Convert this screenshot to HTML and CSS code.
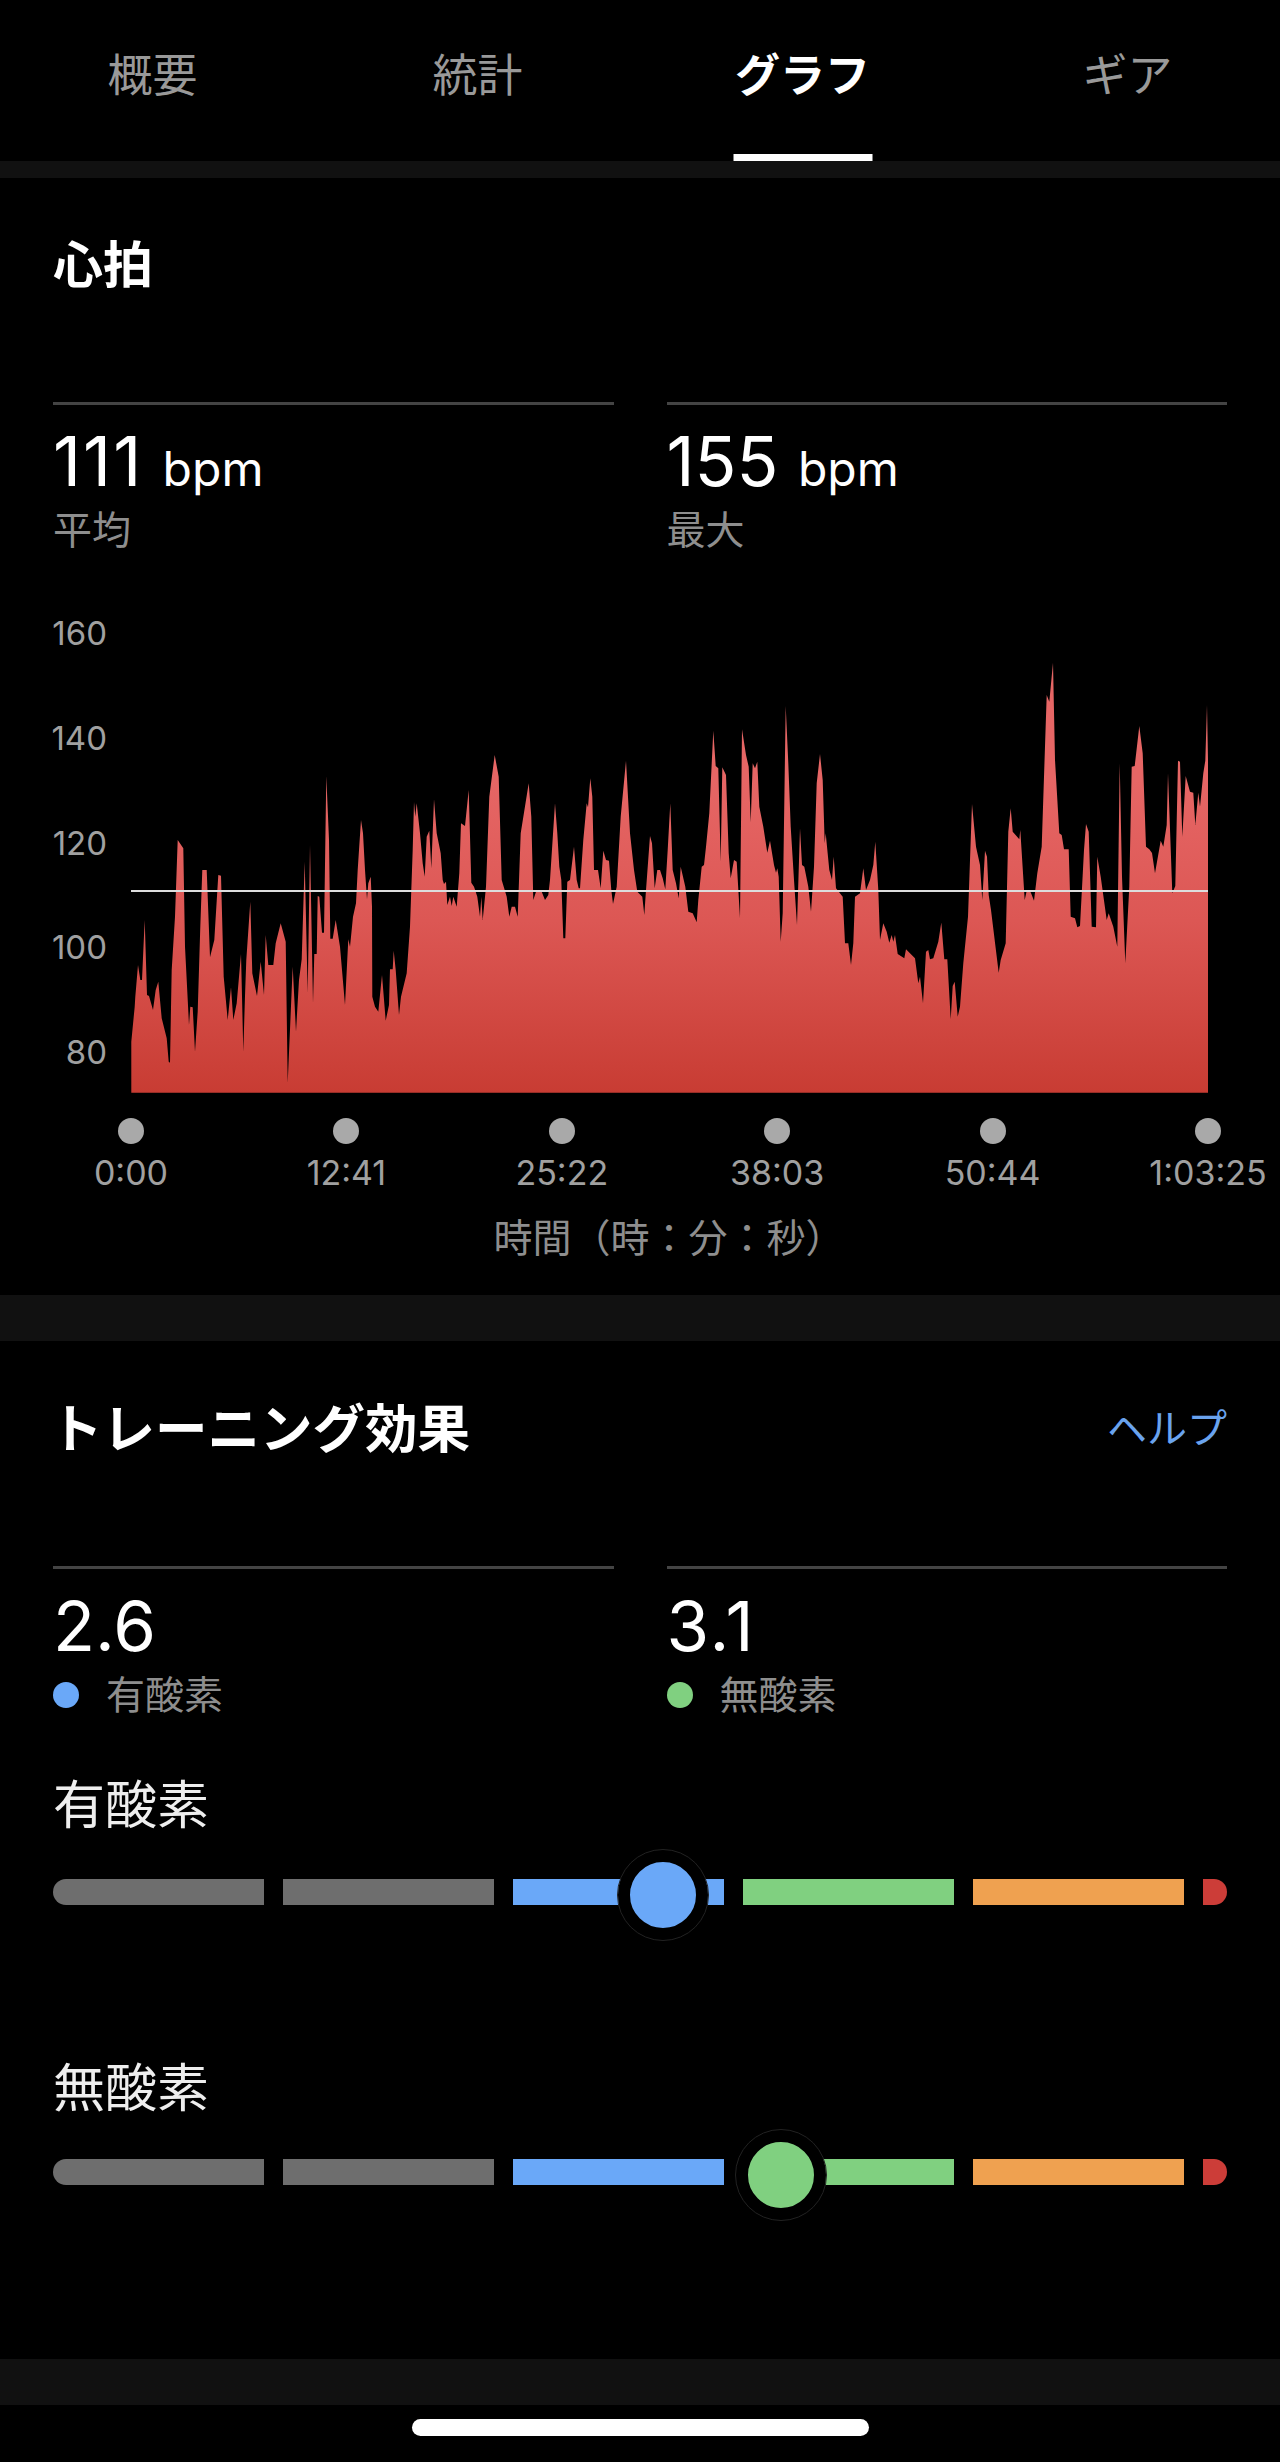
FILE: index.html
```html
<!DOCTYPE html>
<html lang="ja">
<head>
  <meta charset="utf-8">
  <title>グラフ</title>
  <link rel="stylesheet" href="styles.css">
</head>

<body>
  <nav class="tabs">
    <a class="tab">概要</a>
    <a class="tab">統計</a>
    <a class="tab active">グラフ</a>
    <a class="tab">ギア</a>
  </nav>
  <div class="band band-top"></div>

  <section class="card card-heart">
    <h2 class="card-title">心拍</h2>
    <div class="stats">
      <div class="stat">
        <div class="stat-value"><span class="num-wide">111</span> <span class="unit">bpm</span></div>
        <div class="stat-label">平均</div>
      </div>
      <div class="stat">
        <div class="stat-value">155 <span class="unit">bpm</span></div>
        <div class="stat-label">最大</div>
      </div>
    </div>

    <div class="chart">
      <div class="y-axis">
        <span>160</span>
        <span>140</span>
        <span>120</span>
        <span>100</span>
        <span>80</span>
      </div>
      <svg class="plot" width="1077" height="453" viewBox="131 640 1077 453">
        <defs>
          <linearGradient id="hrFill" gradientUnits="userSpaceOnUse" x1="0" y1="780" x2="0" y2="1093">
            <stop offset="0" stop-color="#e66665" />
            <stop offset="0.45" stop-color="#dc5754" />
            <stop offset="1" stop-color="#c83c33" />
          </linearGradient>
        </defs>
        <polygon fill="url(#hrFill)" points="131.3,1092.7 131.3,1041.7 134.7,1006.7 135.3,996.7 138,965 140.3,980 142,980 144.7,920 147,995 149,996 153,1010 155.7,990 158.3,981.7 161.7,1018.3 166.7,1038.3 168.7,1061.7 170,1062.7 171.7,970 175,916.7 177.7,840 183.3,848.3 185,946.7 189,1025 190.3,1006.7 192.7,1007.3 195,1051.7 197.7,1011.7 200.3,926.7 202.3,870 206.7,870 210,957.3 214.3,940 218.3,875 221,875.7 223.7,976.7 227.7,1020 231,987.3 233.3,1020 236.7,1003.3 241,954 243.3,1051.7 245,996 246.3,960 250.3,901.7 252.3,973.3 257,996 260.7,961.7 264,995 265.7,935 268.3,965 273.3,965 275.7,943.3 280.7,923.3 285.7,941.7 287.7,1082.7 292.7,966.7 296,1031.7 299,980 301.7,959.3 304.7,861.7 307.7,993.3 310,845 313,1003.3 314.3,954 316.7,954 317.7,896 319.3,896.7 322,932.7 324,932.7 326.3,776 329,840 330.3,938.7 332.7,938.7 335.7,920 340,946.7 345,1005 348.3,939.3 350,946.7 353,916.7 356,903.3 357.7,870 361,820 363,833.3 365,870 367,899.3 368.3,883.3 370.7,876.7 372,906.7 372.3,996.7 375,1006.7 378.3,1011.7 382,975 385.7,1020.7 389,1005 390,969.3 392.7,969.3 393.7,950.7 395.7,970 399,1015 401,996.7 406.7,973.3 410,926.7 412.7,850 414,802 415.3,816.7 416.7,803.3 420,833.3 422.7,863.3 424.7,876.7 426.7,836.7 429.3,830.7 431.3,868.3 434,799.3 436.7,833.3 440.7,853.3 442.7,880 444,884 446,881.7 447.3,905 450,896.7 451.7,906 453.3,896.7 456.7,906.7 459.3,873.3 461,823.3 465,826 468.7,790 471.3,882.7 474,886.7 477.3,896.7 480,916.7 481.3,896.7 482.7,920 486,886.7 489.3,796.7 494.7,755 498.7,776.7 501.7,880 506.7,896.7 509.3,916.7 511.7,906.7 515,906.7 517.7,916.7 520.7,833.3 528.7,783.3 531.3,816.7 533.3,900 536,891.7 541.7,891.7 545,900 548.3,895 550,880 555,803.3 557.3,833.3 559.3,866.7 561.3,880 563.3,938.3 565.3,938.3 567.3,881.7 570,880 574,846.7 576.7,880 578.7,888.3 580,888.3 583.3,840 586.7,803.3 588,807.3 590.3,778.3 592.3,796.7 594,870 598,870 600.7,888.3 603.3,850.7 606,860 609,860.7 611.3,890 613,904 616.7,886.7 620.7,816.7 626,760.7 630,833.3 634,870 637.3,891.7 642.3,896.7 644.3,915 646,890 650,836 652,843.3 654.7,888.3 657.3,870 660,870 662.7,878.3 665.3,889.3 667.7,850 670.3,803.3 672.7,870 676,883.3 678.7,898.3 680.7,866.7 685.3,886.7 688.3,911.7 692.7,913.3 696.7,922.3 698.3,900 701.7,866.7 704,865 706,846.7 709.3,813.3 713.3,730.7 715.7,766 718.3,768.3 720.7,861.7 722.3,767.3 726,775 728.7,853.3 730.7,878.3 734,860 736.7,861.7 740,918.3 742,729.3 746,755 748.7,766.7 750.7,822.3 752.7,763.3 755,768.3 757.3,761.7 759.3,806.7 763.3,826.7 767.3,852.7 770,840.7 774,865 776,872.7 777.3,868.3 778.7,876.7 780.7,941.7 782.7,913.3 785.7,706 788.3,763.3 790.7,826.7 794,880 797,925 800,828.3 802,865 804.3,866.7 808.3,886.7 811,911.7 814,866.7 816.7,783.3 820,754 822.7,780 824.7,843.3 825.7,833.3 829.3,870 832,880 833.7,856.7 836,888.3 842.7,896.7 845,943.3 848.3,943.3 851,965 853.3,943.3 855,896.7 860,893.3 863.3,868.3 866,890 870,880 873.3,865 875.3,841.7 878.3,890 880,940 883.3,923.3 886.7,931.7 889.3,942.7 891.7,935 893.3,941.7 895,935 897.7,954 904.3,958.3 906,949.3 915,958.3 918.3,983.3 920,976.7 923,1003.3 926,951.7 928.3,950 930,959.3 933.3,958.3 938.3,941.7 941.3,922.5 944.3,959.3 947.3,959.3 950.7,1019.3 952.7,986 954.7,981.7 957.7,1016.7 960,1006.7 963.3,963.3 968,916.7 972,804 976,846.7 980,865 982.3,900 985,850.7 987,856.7 988.7,895 991,910 998.7,972.7 1000.7,960 1005.7,943.3 1008.3,831.7 1010.7,808.3 1012.7,831.7 1019.3,839.3 1020.3,830 1024.7,900 1026.7,890.7 1030.7,892.3 1034,900.7 1037.3,873.3 1041.7,846.7 1046.7,695 1049.3,701.7 1053,662.7 1055,760 1059.3,833.3 1061.7,835 1064,849.3 1068.7,849.3 1070.7,916.7 1075,918.3 1077.3,927.3 1080,926 1084,850 1086,824 1088.7,831.7 1091.7,926.7 1096,927.3 1097.3,856.7 1100.7,876.7 1106.7,920 1108.7,913.3 1113.3,926.7 1117.3,946.7 1119.7,763.3 1122,876.7 1125.3,963.3 1129.3,886.7 1131.7,766.7 1134.7,766 1139.3,726 1142.7,753.3 1146,846.7 1149.3,849.3 1152,853 1155,873.3 1160.7,840.7 1163.3,846.7 1166.7,825 1168,773.3 1172.3,893.3 1175.3,886 1178,760.7 1180,761.7 1182.3,836.7 1185.7,776 1190,791.7 1193.3,792.7 1195.3,825 1198.3,792.7 1200,806.7 1203.3,773.3 1205.3,760.7 1207,705 1208,760 1208,1092.7" />
        <line class="avg-line" x1="131" y1="891" x2="1208" y2="891" />
      </svg>
    </div>

    <div class="ticks">
      <div class="tick"><span class="tick-dot"></span><span class="tick-label">0:00</span></div>
      <div class="tick"><span class="tick-dot"></span><span class="tick-label">12:41</span></div>
      <div class="tick"><span class="tick-dot"></span><span class="tick-label">25:22</span></div>
      <div class="tick"><span class="tick-dot"></span><span class="tick-label">38:03</span></div>
      <div class="tick"><span class="tick-dot"></span><span class="tick-label">50:44</span></div>
      <div class="tick"><span class="tick-dot"></span><span class="tick-label">1:03:25</span></div>
    </div>
    <div class="axis-title">時間（時：分：秒）</div>
  </section>
  <div class="band"></div>

  <section class="card card-effect">
    <div class="card-head">
      <h2 class="card-title card-title-wide">トレーニング効果</h2>
      <a class="help">ヘルプ</a>
    </div>
    <div class="stats">
      <div class="stat">
        <div class="stat-value">2.6</div>
        <div class="stat-label"><span class="dot dot-blue"></span>有酸素</div>
      </div>
      <div class="stat">
        <div class="stat-value"><span class="num-wide">3.1</span></div>
        <div class="stat-label"><span class="dot dot-green"></span>無酸素</div>
      </div>
    </div>

    <h3 class="scale-title">有酸素</h3>
    <div class="scale">
      <span class="seg seg-gray"></span>
      <span class="seg seg-gray"></span>
      <span class="seg seg-blue"></span>
      <span class="seg seg-green"></span>
      <span class="seg seg-orange"></span>
      <span class="seg seg-red"></span>
      <span class="thumb thumb-blue" style="left: 51.96%"></span>
    </div>

    <h3 class="scale-title scale-title-second">無酸素</h3>
    <div class="scale scale-second">
      <span class="seg seg-gray"></span>
      <span class="seg seg-gray"></span>
      <span class="seg seg-blue"></span>
      <span class="seg seg-green"></span>
      <span class="seg seg-orange"></span>
      <span class="seg seg-red"></span>
      <span class="thumb thumb-green" style="left: 62%"></span>
    </div>
  </section>
  <div class="band"></div>

  <div class="home-area">
    <div class="home-bar"></div>
  </div>
</body>
</html>
```

FILE: styles.css
```css
body {
  margin: 0;
  overflow-x: hidden;
  background: #000;
  color: #fff;
  font-family: Inter, "Noto Sans CJK JP", sans-serif;
}

.tabs {
  display: grid;
  grid-template-columns: repeat(4, 1fr);
  height: 161px;
  margin: 0 -10px;
}

.tab {
  display: flex;
  justify-content: center;
  padding-top: 49px;
  box-sizing: border-box;
  line-height: 54px;
  font-size: 45px;
  color: #999;
}

.tab.active {
  position: relative;
  color: #fff;
  font-weight: 700;
}

.tab.active::after {
  content: "";
  position: absolute;
  left: 50%;
  bottom: 0;
  width: 139px;
  height: 7px;
  transform: translateX(-50%);
  background: #fff;
}

.band {
  height: 46px;
  background: #111;
}

.band-top {
  height: 17px;
}

.card {
  padding: 0 53px;
}

.card-heart {
  padding-top: 57px;
  padding-bottom: 32px;
}

.card-effect {
  padding-top: 58px;
  padding-bottom: 174px;
}

.card-head {
  display: flex;
  justify-content: space-between;
  align-items: center;
}

.card-title {
  margin: 0;
  line-height: 60px;
  font-size: 50px;
  font-weight: 700;
}

.card-title-wide {
  font-size: 52.5px;
  margin-left: -3px;
}

.help {
  line-height: 54px;
  font-size: 40px;
  color: #6aa3ee;
}

.stats {
  display: grid;
  grid-template-columns: 1fr 1fr;
  column-gap: 53px;
  margin-top: 107px;
}

.stat {
  border-top: 3px solid #444;
  padding-top: 16px;
}

.card-effect .stat {
  padding-top: 17px;
}

.stat-value {
  line-height: 80px;
  font-size: 69px;
  white-space: nowrap;
}

.num-wide {
  letter-spacing: 2px;
}

.unit {
  line-height: 0;
  font-size: 48px;
}

.stat-label {
  display: flex;
  align-items: center;
  margin-top: 4px;
  line-height: 50px;
  font-size: 39px;
  color: #8e8e8e;
}

.dot {
  width: 26px;
  height: 26px;
  margin-right: 27px;
  border-radius: 50%;
}

.dot-blue {
  background: #6aa8f8;
}

.dot-green {
  background: #80d080;
}

.chart {
  display: grid;
  grid-template-columns: 54px 1077px;
  column-gap: 24px;
  margin-top: 58px;
}

.y-axis {
  display: flex;
  flex-direction: column;
  justify-content: space-between;
  align-items: flex-end;
  height: 459px;
  line-height: 40px;
  font-size: 33px;
  color: #a0a0a0;
}

.plot {
  display: block;
  margin-top: 27px;
}

.avg-line {
  stroke: #ddd;
  stroke-width: 2;
}

.ticks {
  display: flex;
  justify-content: space-between;
  margin: 25px 6px 0 65px;
}

.tick {
  display: flex;
  flex-direction: column;
  align-items: center;
  width: 26px;
}

.tick-dot {
  width: 26px;
  height: 26px;
  border-radius: 50%;
  background: #a9a9a9;
}

.tick-label {
  margin-top: 9px;
  line-height: 40px;
  font-size: 34px;
  color: #a0a0a0;
  white-space: nowrap;
}

.axis-title {
  margin: 20px 0 0 78px;
  padding-right: 20px;
  line-height: 50px;
  font-size: 39px;
  text-align: center;
  color: #8e8e8e;
}

.scale-title {
  margin: 56px 0 0;
  line-height: 60px;
  font-size: 52px;
  font-weight: 400;
  color: #eee;
}

.scale-title-second {
  margin-top: 154px;
}

.scale {
  position: relative;
  display: flex;
  gap: 19.5px;
  height: 26px;
  margin-top: 43px;
}

.scale-second {
  margin-top: 40px;
}

.seg {
  flex: 210.6px 0 0;
}

.seg-gray {
  background: #6e6e6e;
}

.seg-gray:first-child {
  border-radius: 13px 0 0 13px;
}

.seg-blue {
  background: #6aa8f8;
}

.seg-green {
  background: #80d080;
}

.seg-orange {
  background: #efa150;
}

.seg-red {
  flex: 24px 0 0;
  border-radius: 0 13px 13px 0;
  background: #cc3d38;
}

.thumb {
  position: absolute;
  top: 16px;
  width: 66px;
  height: 66px;
  border: 12px solid #000;
  border-radius: 50%;
  outline: 1px solid #222;
  transform: translate(-50%, -50%);
}

.thumb-blue {
  background: #6aa8f8;
}

.thumb-green {
  background: #80d080;
}

.home-area {
  padding-top: 14px;
  height: 43px;
}

.home-bar {
  width: 457px;
  height: 17px;
  margin-left: 412px;
  border-radius: 9px;
  background: #fff;
}
```
